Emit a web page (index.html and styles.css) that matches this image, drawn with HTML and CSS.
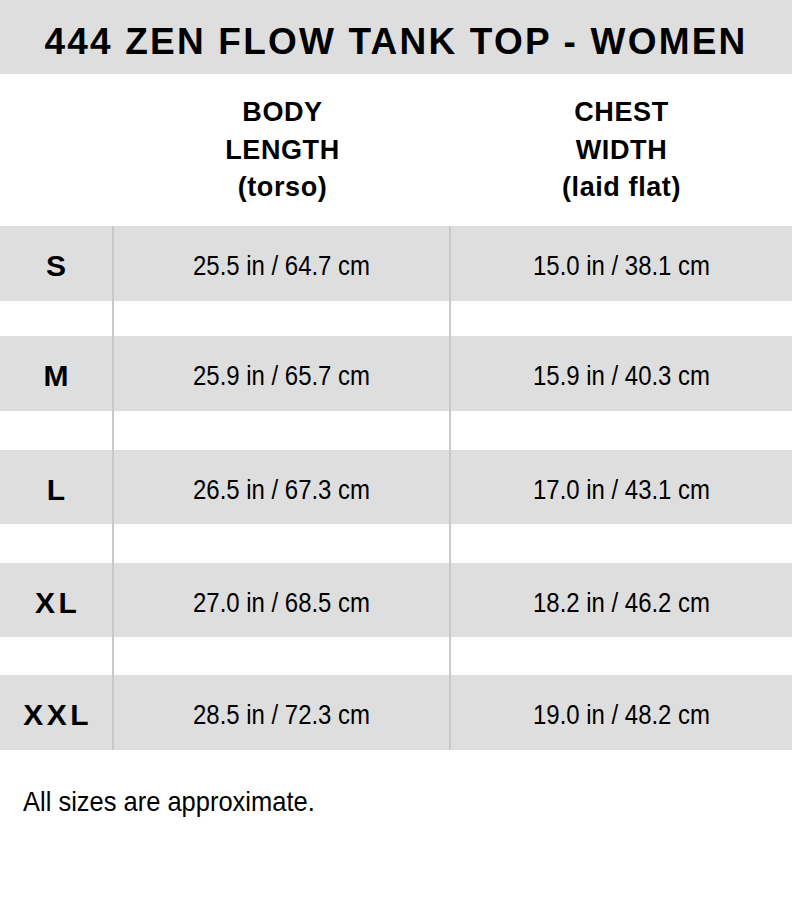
FILE: index.html
```html
<!DOCTYPE html>
<html lang="en">
<head>
<meta charset="utf-8">
<title>444 Zen Flow Tank Top - Women size chart</title>
<link rel="stylesheet" href="styles.css">
</head>
<body>
<div class="chart">
  <h1 class="title">444 ZEN FLOW TANK TOP - WOMEN</h1>
  <div class="head">
    <div class="head-cell"></div>
    <div class="head-cell">BODY<br>LENGTH<br>(torso)</div>
    <div class="head-cell">CHEST<br>WIDTH<br>(laid flat)</div>
  </div>
  <div class="rows">
    <div class="row data r75"><div class="size">S</div><div class="val"><span>25.5 in / 64.7 cm</span></div><div class="val"><span>15.0 in / 38.1 cm</span></div></div>
    <div class="row gap g35"><div></div><div></div><div></div></div>
    <div class="row data r75"><div class="size">M</div><div class="val"><span>25.9 in / 65.7 cm</span></div><div class="val"><span>15.9 in / 40.3 cm</span></div></div>
    <div class="row gap g39"><div></div><div></div><div></div></div>
    <div class="row data r74"><div class="size">L</div><div class="val"><span>26.5 in / 67.3 cm</span></div><div class="val"><span>17.0 in / 43.1 cm</span></div></div>
    <div class="row gap g39"><div></div><div></div><div></div></div>
    <div class="row data r74"><div class="size">XL</div><div class="val"><span>27.0 in / 68.5 cm</span></div><div class="val"><span>18.2 in / 46.2 cm</span></div></div>
    <div class="row gap g38"><div></div><div></div><div></div></div>
    <div class="row data r75"><div class="size">XXL</div><div class="val"><span>28.5 in / 72.3 cm</span></div><div class="val"><span>19.0 in / 48.2 cm</span></div></div>
  </div>
  <p class="note"><span>All sizes are approximate.</span></p>
</div>
</body>
</html>
```
FILE: styles.css
```css
html, body {
  margin: 0;
  padding: 0;
  background: #ffffff;
}

.chart {
  width: 792px;
  color: #000000;
  font-family: "Liberation Sans", Arial, sans-serif;
}

.title {
  margin: 0;
  height: 74px;
  box-sizing: border-box;
  padding-top: 10px;
  line-height: 64px;
  background: #dedede;
  text-align: center;
  font-size: 37px;
  font-weight: bold;
  letter-spacing: 2.2px;
}

.head {
  display: grid;
  grid-template-columns: 114px 337px 1fr;
  height: 152px;
  box-sizing: border-box;
  padding-top: 20px;
}

.head-cell {
  text-align: center;
  font-size: 27px;
  font-weight: bold;
  line-height: 37.5px;
  letter-spacing: 0.6px;
}

.rows {
  display: flex;
  flex-direction: column;
}

.row {
  display: grid;
  grid-template-columns: 114px 337px 1fr;
}

.row > div:nth-child(1),
.row > div:nth-child(2) {
  border-right: 2px solid #c9c9c9;
}

.data {
  background: #dedede;
}

.data > div {
  display: flex;
  align-items: center;
  justify-content: center;
  padding-top: 5px;
}

.r75 { height: 75px; }
.r74 { height: 74px; }
.g35 { height: 35px; }
.g38 { height: 38px; }
.g39 { height: 39px; }

.size {
  font-size: 30px;
  font-weight: bold;
  letter-spacing: 3.5px;
  text-indent: 3.5px;
}

.val {
  font-size: 28px;
}

.val span {
  display: inline-block;
  white-space: nowrap;
  transform: scaleX(0.855);
  transform-origin: center;
}

.note {
  margin: 0;
  padding: 36px 0 0 23px;
  font-size: 28px;
}

.note span {
  display: inline-block;
  white-space: nowrap;
  transform: scaleX(0.91);
  transform-origin: left center;
}
```
